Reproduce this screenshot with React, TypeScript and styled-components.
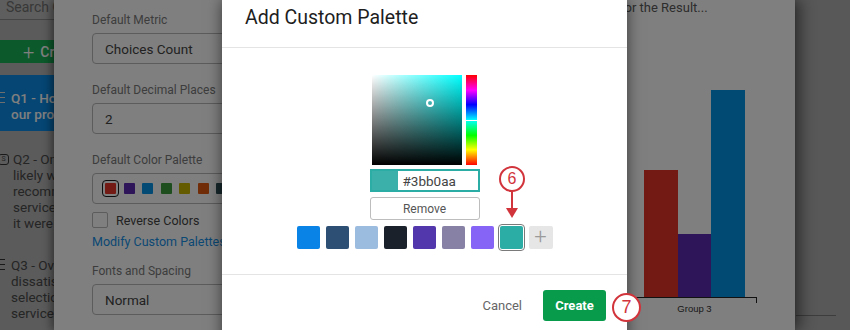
import styled, { createGlobalStyle } from "styled-components";

const GlobalStyle = createGlobalStyle`
  html, body {
    margin: 0;
    padding: 0;
    overflow: hidden;
  }
  body {
    font-family: Roboto, "Liberation Sans", Arial, sans-serif;
  }
`;

const Page = styled.div`
  position: relative;
  width: 850px;
  height: 330px;
  overflow: hidden;
  display: flex;
  background: #b0b0b0;
`;

/* ---------- left question list (behind the overlay) ---------- */

const Sidebar = styled.aside`
  width: 54px;
  flex: none;
  background: #b6b6b6;
  display: flex;
  flex-direction: column;
  overflow: hidden;
  white-space: nowrap;
`;

const SearchBox = styled.div`
  height: 19px;
  border-bottom: 1px solid #8a8a8a;
  background: #bcbcbc;
  color: #707070;
  font-size: 14px;
  line-height: 14px;
  padding-left: 6px;
  overflow: hidden;
`;

const CreateButton = styled.div`
  margin-top: 20px;
  height: 23px;
  background: #18b456;
  color: #fff;
  font-size: 14px;
  font-weight: 500;
  display: flex;
  align-items: center;
  gap: 6px;
  padding-left: 23px;

  span:first-child {
    font-size: 20px;
    font-weight: 300;
  }
`;

const QuestionItem = styled.div<{ $active?: boolean; $top: number }>`
  margin-top: ${(p) => p.$top}px;
  padding: ${(p) => (p.$active ? "15px 0 9px" : "0")};
  background: ${(p) => (p.$active ? "#0a8ce8" : "transparent")};
  color: ${(p) => (p.$active ? "#fff" : "#4a4a4a")};
  font-weight: ${(p) => (p.$active ? 500 : 400)};
  font-size: 13.5px;
  line-height: 16px;
  display: flex;
  gap: 3px;
  overflow: hidden;
`;

const QIcon = styled.div<{ $light?: boolean }>`
  width: 8px;
  flex: none;
  display: flex;
  flex-direction: column;
  gap: 4px;
  padding-top: 2px;

  i {
    display: block;
    width: 5px;
    height: 1px;
    background: ${(p) => (p.$light ? "#ddd" : "#333")};
  }
`;

const SIcon = styled.div`
  width: 9px;
  height: 9px;
  margin: 3px 1px 0 -2px;
  flex: none;
  border: 1px solid #333;
  border-radius: 3px;
  font-size: 7px;
  line-height: 9px;
  text-align: center;
`;

const QLines = styled.div`
  display: flex;
  flex-direction: column;
  overflow: hidden;
`;

/* ---------- main white panel (behind the overlay) ---------- */

const Main = styled.main`
  flex: 0 0 741px;
  background: #fff;
  display: flex;
  box-shadow: -3px 0 8px rgba(0, 0, 0, 0.35), 6px 0 14px rgba(0, 0, 0, 0.45);
  position: relative;
  z-index: 1;
`;

const Settings = styled.section`
  width: 260px;
  padding: 12px 0 0 38px;
  display: flex;
  flex-direction: column;
`;

const FieldLabel = styled.div<{ $gap?: number }>`
  margin-top: ${(p) => p.$gap ?? 0}px;
  font-size: 12px;
  line-height: 16px;
  color: #7a7a7a;
  margin-bottom: 5px;
`;

const SelectBox = styled.div`
  height: 31px;
  box-sizing: border-box;
  border: 1px solid #b8b8b8;
  border-radius: 4px;
  padding: 0 12px;
  display: flex;
  align-items: center;
  gap: 7.5px;
  font-size: 13.5px;
  color: #444;
`;

const PaletteDot = styled.span<{ $color: string; $selected?: boolean }>`
  width: 11px;
  height: 11px;
  flex: none;
  background: ${(p) => p.$color};
  border-radius: 1px;
  outline: ${(p) => (p.$selected ? "1.5px solid #1a1a1a" : "none")};
  outline-offset: 2px;
`;

const CheckRow = styled.label`
  margin-top: 8px;
  display: flex;
  align-items: center;
  gap: 8px;
  font-size: 12.5px;
  color: #444;
`;

const CheckBox = styled.span`
  width: 14px;
  height: 14px;
  border: 1px solid #b8b8b8;
  border-radius: 2px;
`;

const Link = styled.a`
  margin-top: 6px;
  font-size: 12.5px;
  line-height: 16px;
  color: #1690e8;
`;

const ChartColumn = styled.section`
  margin-left: auto;
  width: 175px;
  display: flex;
  flex-direction: column;
`;

const ChartTitle = styled.div`
  font-size: 13px;
  line-height: 16px;
  color: #5a5a5a;
  white-space: nowrap;
`;

const Plot = styled.div`
  height: 281px;
  padding-left: 24px;
  display: flex;
  align-items: flex-end;
`;

const Bar = styled.div<{ $color: string; $w: number }>`
  width: ${(p) => p.$w}px;
  background: ${(p) => p.$color};
`;

const Axis = styled.div`
  margin-left: 16px;
  width: 120px;
  height: 5px;
  border-top: 1px solid #222;
  border-right: 1px solid #222;
`;

const AxisLabel = styled.div`
  margin-left: 24px;
  width: 101px;
  text-align: center;
  font-family: "Liberation Sans", Arial, sans-serif;
  font-size: 9.5px;
  line-height: 11px;
  color: #333;
`;

const StepNumber = styled.div`
  margin-top: 3px;
  font-family: "Liberation Sans", Arial, sans-serif;
  font-size: 12px;
  line-height: 12px;
  color: #111;
`;

const RightPane = styled.div`
  flex: 1;
  background: #b0b0b0;
  padding-top: 315px;

  div {
    margin-left: 1px;
    width: 40px;
    height: 1px;
    background: #7a7a7a;
  }
`;

const Overlay = styled.div`
  position: absolute;
  inset: 0;
  background: rgba(0, 0, 0, 0.5);
  z-index: 2;
`;

/* ---------- modal ---------- */

const Modal = styled.div`
  position: absolute;
  left: 222px;
  top: 0;
  width: 405px;
  height: 345px;
  background: #fff;
  z-index: 3;
  display: flex;
  flex-direction: column;
  box-shadow: 0 0 14px rgba(0, 0, 0, 0.55);
`;

const ModalHeader = styled.header`
  height: 48px;
  box-sizing: border-box;
  padding: 0 23px 12px;
  border-bottom: 1px solid #e4e4e4;
  display: flex;
  align-items: center;
  font-size: 19.5px;
  color: #1e1e1e;
`;

const ModalBody = styled.div`
  height: 227px;
  box-sizing: border-box;
  padding-top: 27px;
  display: flex;
  flex-direction: column;
  align-items: center;
  border-bottom: 1px solid #e4e4e4;
`;

const PickerRow = styled.div`
  display: flex;
  gap: 4px;
`;

const SatBox = styled.div<{ $hue: string }>`
  position: relative;
  width: 90px;
  height: 90px;
  background: linear-gradient(to top, #000, transparent),
    linear-gradient(to right, #fff, ${(p) => p.$hue});
`;

const SatHandle = styled.span`
  position: absolute;
  left: 54px;
  top: 24px;
  width: 4px;
  height: 4px;
  border: 2px solid #fff;
  border-radius: 50%;
`;

const HueBar = styled.div`
  position: relative;
  width: 11px;
  height: 90px;
  background: linear-gradient(
    to bottom,
    #f00 0%,
    #f0f 17%,
    #00f 33%,
    #0ff 50%,
    #0f0 67%,
    #ff0 83%,
    #f00 100%
  );
`;

const HueMarker = styled.span`
  position: absolute;
  left: 0;
  right: 0;
  top: 45px;
  height: 1px;
  background: #fff;
`;

const HexField = styled.div`
  margin-top: 4px;
  width: 110px;
  height: 23px;
  box-sizing: border-box;
  border: 2px solid #2bada5;
  display: flex;
  align-items: center;
`;

const HexPreview = styled.span<{ $color: string }>`
  width: 26px;
  align-self: stretch;
  background: ${(p) => p.$color};
`;

const HexText = styled.span`
  padding-left: 5px;
  font-size: 13.5px;
  color: #444;
`;

const RemoveButton = styled.button`
  margin-top: 5px;
  width: 110px;
  height: 23px;
  border: 1px solid #bdbdbd;
  border-radius: 3px;
  background: #fff;
  font-family: inherit;
  font-size: 12px;
  color: #555;
  padding: 0;
`;

const SwatchRow = styled.div`
  margin-top: 6px;
  display: flex;
  gap: 6px;
`;

const Swatch = styled.span<{ $color: string; $selected?: boolean }>`
  width: 23px;
  height: 23px;
  border-radius: 2px;
  background: ${(p) => p.$color};
  outline: ${(p) => (p.$selected ? "1px solid #7a7a7a" : "none")};
  outline-offset: 1px;
`;

const AddSwatch = styled.span`
  width: 24px;
  height: 23px;
  border-radius: 2px;
  background: #e6e6e6;
  color: #9a9a9a;
  font-size: 22px;
  font-weight: 300;
  line-height: 22px;
  text-align: center;
`;

const ModalFooter = styled.footer`
  display: flex;
  justify-content: flex-end;
  align-items: center;
  gap: 21px;
  padding: 15px 21px 0 0;
`;

const CancelButton = styled.button`
  border: none;
  background: none;
  padding: 0;
  font-family: inherit;
  font-size: 13px;
  color: #666;
`;

const CreateBtn = styled.button`
  width: 63px;
  height: 31px;
  border: none;
  border-radius: 3px;
  background: #089b4c;
  color: #fff;
  font-family: inherit;
  font-size: 13px;
  font-weight: 700;
`;

/* ---------- annotation callouts ---------- */

const Callout = styled.div<{ $x: number; $y: number; $size: number }>`
  position: absolute;
  z-index: 4;
  left: ${(p) => p.$x}px;
  top: ${(p) => p.$y}px;
  width: ${(p) => p.$size}px;
  height: ${(p) => p.$size}px;
  box-sizing: border-box;
  border: 2px solid #d2343c;
  border-radius: 50%;
  background: #fff;
  color: #d2343c;
  font-family: "Liberation Sans", Arial, sans-serif;
  font-size: ${(p) => Math.round(p.$size * 0.62)}px;
  display: flex;
  align-items: center;
  justify-content: center;
`;

const Arrow = styled.svg`
  position: absolute;
  z-index: 4;
  left: 505px;
  top: 191px;
`;

const paletteColors = ["#e6342a", "#5c28b0", "#0694e8", "#3c9a3c", "#c8b400", "#e05a10", "#2e5058"];
const swatches = ["#0a83e6", "#2e4f74", "#9bbbdf", "#1a212a", "#5236ab", "#8781a5", "#8664f6", "#2bada5"];

export default function App() {
  return (
    <>
      <GlobalStyle />
      <Page>
        <Sidebar>
          <SearchBox>Search Q</SearchBox>
          <CreateButton>
            <span>+</span>
            <span>Create</span>
          </CreateButton>
          <QuestionItem $active $top={12}>
            <QIcon $light>
              <i />
              <i />
              <i />
            </QIcon>
            <QLines>
              <span>Q1 - How</span>
              <span>our prod</span>
            </QLines>
          </QuestionItem>
          <QuestionItem $top={20}>
            <SIcon>S</SIcon>
            <QLines>
              <span>Q2 - On</span>
              <span>likely wo</span>
              <span>recomm</span>
              <span>service t</span>
              <span>it were i</span>
            </QLines>
          </QuestionItem>
          <QuestionItem $top={26}>
            <QIcon>
              <i />
              <i />
              <i />
            </QIcon>
            <QLines>
              <span>Q3 - Ove</span>
              <span>dissatisf</span>
              <span>selection</span>
              <span>services</span>
            </QLines>
          </QuestionItem>
        </Sidebar>

        <Main>
          <Settings>
            <FieldLabel>Default Metric</FieldLabel>
            <SelectBox>Choices Count</SelectBox>
            <FieldLabel $gap={18}>Default Decimal Places</FieldLabel>
            <SelectBox>2</SelectBox>
            <FieldLabel $gap={18}>Default Color Palette</FieldLabel>
            <SelectBox>
              {paletteColors.map((c, i) => (
                <PaletteDot key={c} $color={c} $selected={i === 0} />
              ))}
            </SelectBox>
            <CheckRow>
              <CheckBox />
              Reverse Colors
            </CheckRow>
            <Link>Modify Custom Palettes</Link>
            <FieldLabel $gap={13}>Fonts and Spacing</FieldLabel>
            <SelectBox>Normal</SelectBox>
          </Settings>

          <ChartColumn>
            <ChartTitle>for the Result...</ChartTitle>
            <Plot>
              <Bar $color="#e6342a" $w={34} style={{ height: 127 }} />
              <Bar $color="#5c28b0" $w={33} style={{ height: 63 }} />
              <Bar $color="#0094e8" $w={34} style={{ height: 207 }} />
            </Plot>
            <Axis />
            <AxisLabel>Group 3</AxisLabel>
            <StepNumber>3</StepNumber>
          </ChartColumn>
        </Main>

        <RightPane>
          <div />
        </RightPane>

        <Overlay />

        <Modal>
          <ModalHeader>Add Custom Palette</ModalHeader>
          <ModalBody>
            <PickerRow>
              <SatBox $hue="#00ffff">
                <SatHandle />
              </SatBox>
              <HueBar>
                <HueMarker />
              </HueBar>
            </PickerRow>
            <HexField>
              <HexPreview $color="#3bb0aa" />
              <HexText>#3bb0aa</HexText>
            </HexField>
            <RemoveButton>Remove</RemoveButton>
            <SwatchRow>
              {swatches.map((c, i) => (
                <Swatch key={c} $color={c} $selected={i === swatches.length - 1} />
              ))}
              <AddSwatch>+</AddSwatch>
            </SwatchRow>
          </ModalBody>
          <ModalFooter>
            <CancelButton>Cancel</CancelButton>
            <CreateBtn>Create</CreateBtn>
          </ModalFooter>
        </Modal>

        <Callout $x={499} $y={166} $size={26}>
          6
        </Callout>
        <Arrow width="14" height="28" viewBox="0 0 14 28">
          <line x1="7" y1="0" x2="7" y2="20" stroke="#d2343c" strokeWidth="2" />
          <polygon points="1,17 13,17 7,27" fill="#d2343c" />
        </Arrow>
        <Callout $x={612} $y={293} $size={29}>
          7
        </Callout>
      </Page>
    </>
  );
}
